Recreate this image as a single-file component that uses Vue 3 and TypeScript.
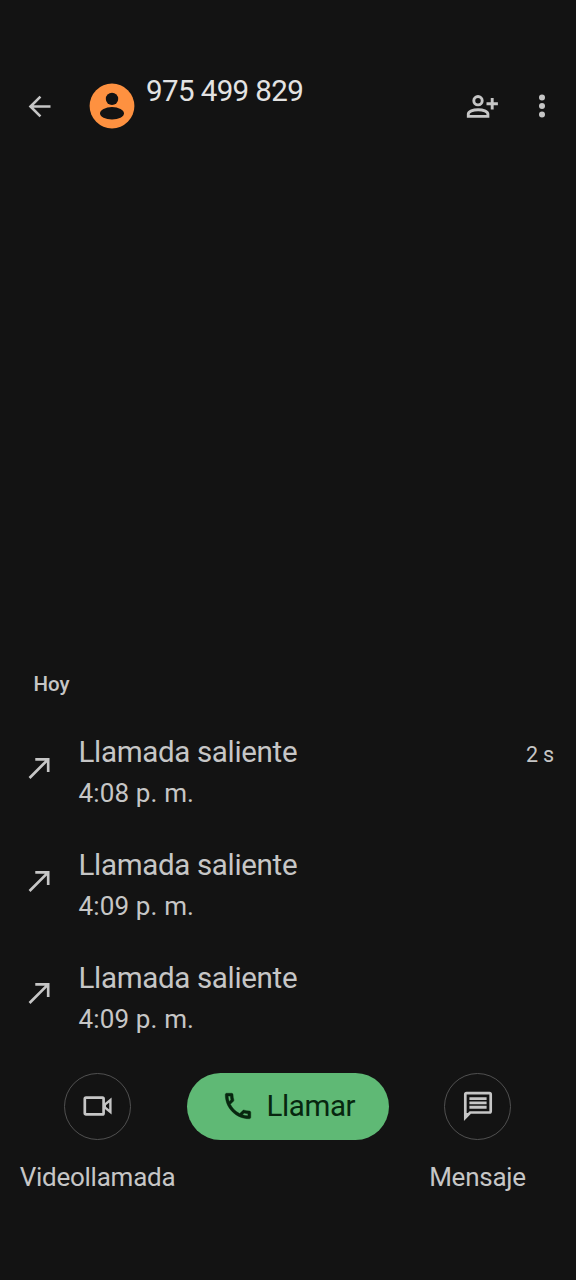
<script setup lang="ts">
interface Call {
  id: number
  label: string
  time: string
  duration?: string
}

const calls: Call[] = [
  { id: 1, label: 'Llamada saliente', time: '4:08 p. m.', duration: '2 s' },
  { id: 2, label: 'Llamada saliente', time: '4:09 p. m.' },
  { id: 3, label: 'Llamada saliente', time: '4:09 p. m.' },
]
</script>

<template>
  <main class="screen">
    <header class="bar">
      <svg class="back" viewBox="0 0 24 24"><path d="M20 11.05H7.75l5.6-5.6L12 4.1 4.1 12l7.9 7.9 1.35-1.35-5.6-5.6H20z" /></svg>
      <svg class="avatar" viewBox="0 0 46 46">
        <circle class="disc" cx="23" cy="23" r="22.4" />
        <circle cx="23" cy="15.9" r="6.2" />
        <ellipse cx="23" cy="30.3" rx="12" ry="6.2" />
      </svg>
      <h1 class="number">975 499 829</h1>
      <svg class="add" viewBox="0 0 32 26">
        <g fill="none" stroke="currentColor" stroke-width="2.9">
          <circle cx="12" cy="7.7" r="4.2" />
          <path d="M2.3 23.4v-2.3c0-2.7 4.8-4.4 9.8-4.4s9.8 1.7 9.8 4.4v2.3z" />
          <path d="M26.2 5v11.4M20.5 10.7h11.4" />
        </g>
      </svg>
      <svg class="more" viewBox="0 0 8 26">
        <circle cx="4" cy="4.6" r="3" /><circle cx="4" cy="13" r="3" /><circle cx="4" cy="21.4" r="3" />
      </svg>
    </header>

    <section class="history">
      <h2 class="day">Hoy</h2>
      <ul class="list">
        <li v-for="call in calls" :key="call.id" class="call">
          <svg class="outgoing" viewBox="0 0 24 24"><path d="M8.8 5v1.9h6.9L4 18.6 5.35 20 17.1 8.25V15H19V5z" /></svg>
          <div class="info">
            <span class="label">{{ call.label }}</span>
            <span class="time">{{ call.time }}</span>
          </div>
          <span v-if="call.duration" class="duration">{{ call.duration }}</span>
        </li>
      </ul>
    </section>

    <footer class="actions">
      <div class="action video">
        <button class="round" aria-label="Videollamada">
          <svg width="32" height="24" viewBox="0 0 32 24">
            <rect x="2.8" y="3.6" width="18.8" height="16.8" rx="1.2" fill="none" stroke="currentColor" stroke-width="2.7" />
            <path d="M22.8 10.6 28.4 6v12l-5.6-4.6z" fill="none" stroke="currentColor" stroke-width="2.4" />
          </svg>
        </button>
        <span class="caption">Videollamada</span>
      </div>
      <button class="dial">
        <svg class="phone" viewBox="0 0 24 24"><path d="M6.54 5c.06.89.21 1.76.45 2.59l-1.2 1.2c-.41-1.2-.67-2.47-.76-3.79h1.51m9.86 12.02c.85.24 1.72.39 2.6.45v1.49c-1.32-.09-2.59-.35-3.8-.75l1.2-1.19M7.5 3H4c-.55 0-1 .45-1 1 0 9.39 7.61 17 17 17 .55 0 1-.45 1-1v-3.49c0-.55-.45-1-1-1-1.24 0-2.45-.2-3.57-.57-.1-.04-.21-.05-.31-.05-.26 0-.51.1-.71.29l-2.2 2.2c-2.83-1.45-5.15-3.76-6.59-6.59l2.2-2.2c.28-.28.36-.67.25-1.02C8.7 6.45 8.5 5.25 8.5 4c0-.55-.45-1-1-1z" /></svg>
        <span class="dial-text">Llamar</span>
      </button>
      <div class="action message">
        <button class="round" aria-label="Mensaje">
          <svg width="34" height="34" viewBox="0 0 34 34">
            <path d="M4.3 28.6V5.4q0-1.2 1.2-1.2h23q1.2 0 1.2 1.2v16.9q0 1.2-1.2 1.2H9.2z" fill="none" stroke="currentColor" stroke-width="2.7" />
            <path d="M4 24h5l-5 5z" />
            <path d="M8.4 9.6h17.2M8.4 13.9h17.2M8.4 18.2h17.2" stroke="currentColor" stroke-width="2.9" />
          </svg>
        </button>
        <span class="caption">Mensaje</span>
      </div>
    </footer>
  </main>
</template>

<style>
body {
  background: #131313;
}
</style>

<style scoped>
.screen {
  box-sizing: border-box;
  width: 576px;
  height: 1280px;
  display: flex;
  flex-direction: column;
  overflow: hidden;
  background: #131313;
  color: #c6c6c6;
  font-family: Roboto, "Liberation Sans", sans-serif;
}
svg {
  display: block;
  flex: none;
  fill: currentColor;
}
h1, h2, ul {
  margin: 0;
  padding: 0;
  font-weight: 400;
}
button {
  padding: 0;
  font: inherit;
}
.bar {
  display: flex;
  align-items: center;
  height: 46px;
  margin-top: 83.4px;
}
.back {
  width: 33px;
  height: 33px;
  margin-left: 22.5px;
}
.avatar {
  width: 46px;
  height: 46px;
  margin-left: 33.5px;
  color: #131313;
}
.disc {
  fill: #fe9140;
}
.number {
  width: 320px;
  margin: -31px 0 0 11px;
  color: #e3e3e3;
  font-size: 29.5px;
  line-height: 36px;
  letter-spacing: -0.6px;
}
.add {
  width: 32px;
  height: 26px;
}
.more {
  width: 8px;
  height: 26px;
  margin-left: 39.5px;
}
.history {
  margin-top: 541px;
}
.day {
  height: 28px;
  padding-left: 33.5px;
  font-size: 20.5px;
  font-weight: 500;
  line-height: 28px;
}
.list {
  margin-top: 26px;
  list-style: none;
}
.call {
  display: flex;
  height: 112.8px;
}
.outgoing {
  width: 33.5px;
  height: 33.5px;
  margin: 26.5px 22.2px 0 22.8px;
}
.info {
  flex: 1;
  display: flex;
  flex-direction: column;
  padding-top: 10px;
}
.label {
  font-size: 29.5px;
  line-height: 36px;
  letter-spacing: -0.32px;
}
.time {
  margin-top: 6px;
  font-size: 26px;
  line-height: 34px;
  letter-spacing: 0.15px;
}
.duration {
  margin: 17px 22px 0 0;
  font-size: 21.5px;
  line-height: 28px;
  letter-spacing: -0.2px;
}
.actions {
  display: flex;
  height: 130px;
  margin-top: 10px;
}
.action {
  display: flex;
  flex-direction: column;
  align-items: center;
}
.video {
  box-sizing: border-box;
  width: 187px;
  padding-left: 8px;
}
.message {
  width: 177px;
}
.round {
  box-sizing: border-box;
  display: grid;
  place-items: center;
  width: 67px;
  height: 67px;
  border: 1px solid #505050;
  border-radius: 50%;
  background: none;
  color: #c6c6c6;
}
.caption {
  margin-top: 20px;
  font-size: 26px;
  line-height: 34px;
  letter-spacing: -0.25px;
}
.dial {
  display: flex;
  align-items: center;
  width: 202px;
  height: 67px;
  border: 0;
  border-radius: 34px;
  background: #5fb975;
  color: #07260f;
}
.phone {
  width: 34px;
  height: 34px;
  margin-left: 33.5px;
  stroke: currentColor;
  stroke-width: 0.3;
}
.dial-text {
  margin-left: 12px;
  font-size: 29.5px;
  line-height: 36px;
  letter-spacing: -0.4px;
}
</style>
